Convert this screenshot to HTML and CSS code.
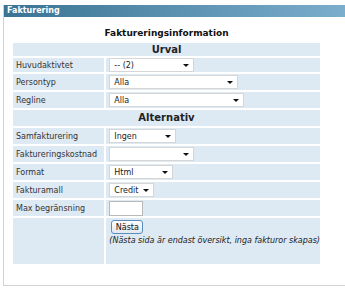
FILE: index.html
```html
<!DOCTYPE html>
<html lang="sv">
<head>
  <meta charset="UTF-8" />
  <title>Fakturering</title>
  <link rel="stylesheet" href="styles.css">
</head>
<body>
  <div class="panel">
    <div class="panel-head">Fakturering</div>

    <div class="panel-body">
      <h1 class="title">Faktureringsinformation</h1>

      <table class="form">
        <tr class="sect r13"><th colspan="2">Urval</th></tr>
        <tr class="r14">
          <td class="lbl">Huvudaktivtet</td>
          <td class="val"><span class="sel w85">-- (2)<i class="arr"></i></span></td>
        </tr>
        <tr>
          <td class="lbl">Persontyp</td>
          <td class="val"><span class="sel w129">Alla<i class="arr"></i></span></td>
        </tr>
        <tr>
          <td class="lbl">Regline</td>
          <td class="val"><span class="sel w135">Alla<i class="arr"></i></span></td>
        </tr>

        <tr class="sect"><th colspan="2">Alternativ</th></tr>
        <tr>
          <td class="lbl">Samfakturering</td>
          <td class="val"><span class="sel w67">Ingen<i class="arr"></i></span></td>
        </tr>
        <tr>
          <td class="lbl">Faktureringskostnad</td>
          <td class="val"><span class="sel w85"><i class="arr"></i></span></td>
        </tr>
        <tr>
          <td class="lbl">Format</td>
          <td class="val"><span class="sel w64">Html<i class="arr"></i></span></td>
        </tr>
        <tr>
          <td class="lbl">Fakturamall</td>
          <td class="val"><span class="sel w45">Credit<i class="arr"></i></span></td>
        </tr>
        <tr>
          <td class="lbl">Max begränsning</td>
          <td class="val"><span class="txt"></span></td>
        </tr>
        <tr class="last">
          <td class="lbl"></td>
          <td class="val">
            <button class="btn">Nästa</button>
            <div class="note">(Nästa sida är endast översikt, inga fakturor skapas)</div>
          </td>
        </tr>
      </table>
    </div>
  </div>
</body>
</html>
```

FILE: styles.css
```css
html, body { overflow: hidden; }
body { margin: 0; background: #fff; font-family: "DejaVu Sans", Verdana, sans-serif; font-size: 8px; color: #333; }

.panel { margin: 5px 0 0 3px; border-left: 1px solid #d2d2d2; border-bottom: 1px solid #d2d2d2; }
.panel-head { height: 12px; line-height: 12px; padding-left: 3px; color: #fff; font-weight: bold; background: linear-gradient(to right, #3a7394, #7badcc); }
.panel-body { padding: 0 0 19px 7px; }

.title { width: 311px; margin: 10px 0 0; text-align: center; font-size: 9px; line-height: 12px; color: #111; }

.form { border-collapse: separate; border-spacing: 2px; margin-top: 2px; width: 311px; }
.form td, .form th { background: #dde9f3; padding: 0; height: 16px; }
.form tr.r13 th { height: 13px; }
.form tr.r14 td { height: 14px; }
.sect th { font-size: 10px; font-weight: bold; color: #222; text-align: center; line-height: 12px; }
.lbl { width: 89px; padding-left: 3px !important; vertical-align: middle; }
.val { padding-left: 3px !important; vertical-align: middle; }

.sel { display: flex; align-items: center; justify-content: space-between; box-sizing: border-box; height: 14px; padding: 0 4px 0 4px; background: #fff; border: 1px solid #d6d6d6; color: #222; }
.arr { width: 0; height: 0; margin-left: auto; border-top: 3px solid #111; border-left: 3px solid transparent; border-right: 3px solid transparent; }
.w45 { width: 45px; }
.w64 { width: 64px; }
.w67 { width: 67px; }
.w85 { width: 85px; }
.w129 { width: 129px; }
.w135 { width: 135px; }

.txt { display: block; box-sizing: border-box; width: 34px; height: 15px; background: #fff; border: 1px solid #b9b9b9; }

.last td { height: 44px; vertical-align: top; }
.last .val { padding-top: 2px !important; }
.btn { display: block; margin-left: 2px; width: 32px; height: 14px; padding: 0; font: 8px "DejaVu Sans", Verdana, sans-serif; color: #111; background: linear-gradient(#fdfdfd, #e2e8ee); border: 1px solid #5b8cc0; border-radius: 3px; }
.note { margin-top: 2px; font-style: italic; color: #222; white-space: nowrap; }
```
